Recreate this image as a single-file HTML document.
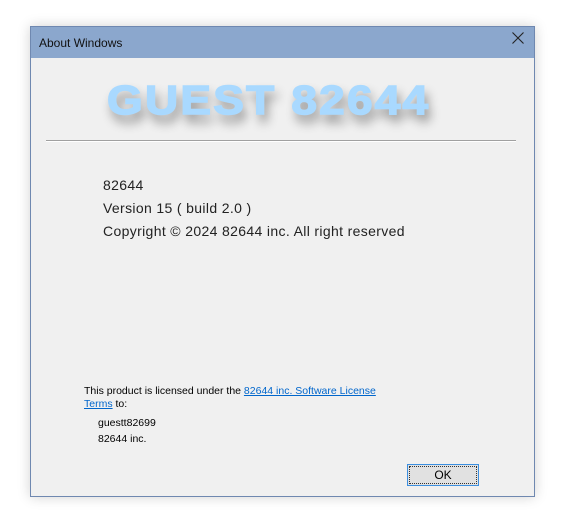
<!DOCTYPE html>
<html><head><style>
body{margin:0;width:565px;height:523px;background:#fff;position:relative;overflow:hidden;font-family:"Liberation Sans",sans-serif;}
.win{position:absolute;left:30px;top:26px;width:503px;height:469px;border:1px solid #6f88b0;background:#f0f0f0;box-shadow:0 0 12px rgba(0,0,0,0.18);}
.tb{height:31px;background:#8ba7cd;position:relative;}
.tb span{position:absolute;left:8px;top:9px;font-size:12px;color:#111;}
.x{position:absolute;right:10px;top:5px;}
.logo{position:absolute;left:76px;top:50px;font-size:41px;font-weight:900;color:#a9d9ff;letter-spacing:2px;transform:scaleX(1.12);transform-origin:left;text-shadow:3px 8px 10px rgba(0,0,0,0.45);-webkit-text-stroke:1.5px #a9d9ff;}
.sep{position:absolute;left:15px;top:113px;width:470px;height:1px;background:#a0a0a0;border-bottom:1px solid #fff;}
.info{position:absolute;left:72px;font-size:14px;color:#222;letter-spacing:0.35px;}
.lic{position:absolute;left:53px;font-size:10.5px;color:#000;}
a{color:#0066cc;text-decoration:underline;}
.ok{position:absolute;left:376px;top:437px;width:70px;height:20px;border:1px solid #3c8fe0;background:#e1e1e1;font-size:12px;text-align:center;line-height:20px;}
.ok i{position:absolute;left:1px;top:1px;right:1px;bottom:1px;border:1px dotted #333;}
</style></head><body>
<div class="win">
<div class="tb"><span>About Windows</span>
<svg class="x" width="12" height="12" viewBox="0 0 12 12"><path d="M0.5 0.5L11.5 11.5M11.5 0.5L0.5 11.5" stroke="#222" stroke-width="1.1"/></svg></div>
<div class="logo">GUEST 82644</div>
<div class="sep"></div>
<div class="info" style="top:150px">82644</div>
<div class="info" style="top:173px">Version 15 ( build 2.0 )</div>
<div class="info" style="top:196px">Copyright © 2024 82644 inc. All right reserved</div>
<div class="lic" style="top:358px">This product is licensed under the <a>82644 inc. Software License</a></div>
<div class="lic" style="top:371px"><a>Terms</a> to:</div>
<div class="lic" style="top:390px;left:67px">guestt82699</div>
<div class="lic" style="top:406px;left:67px">82644 inc.</div>
<div class="ok"><i></i>OK</div>
</div>
</body></html>
